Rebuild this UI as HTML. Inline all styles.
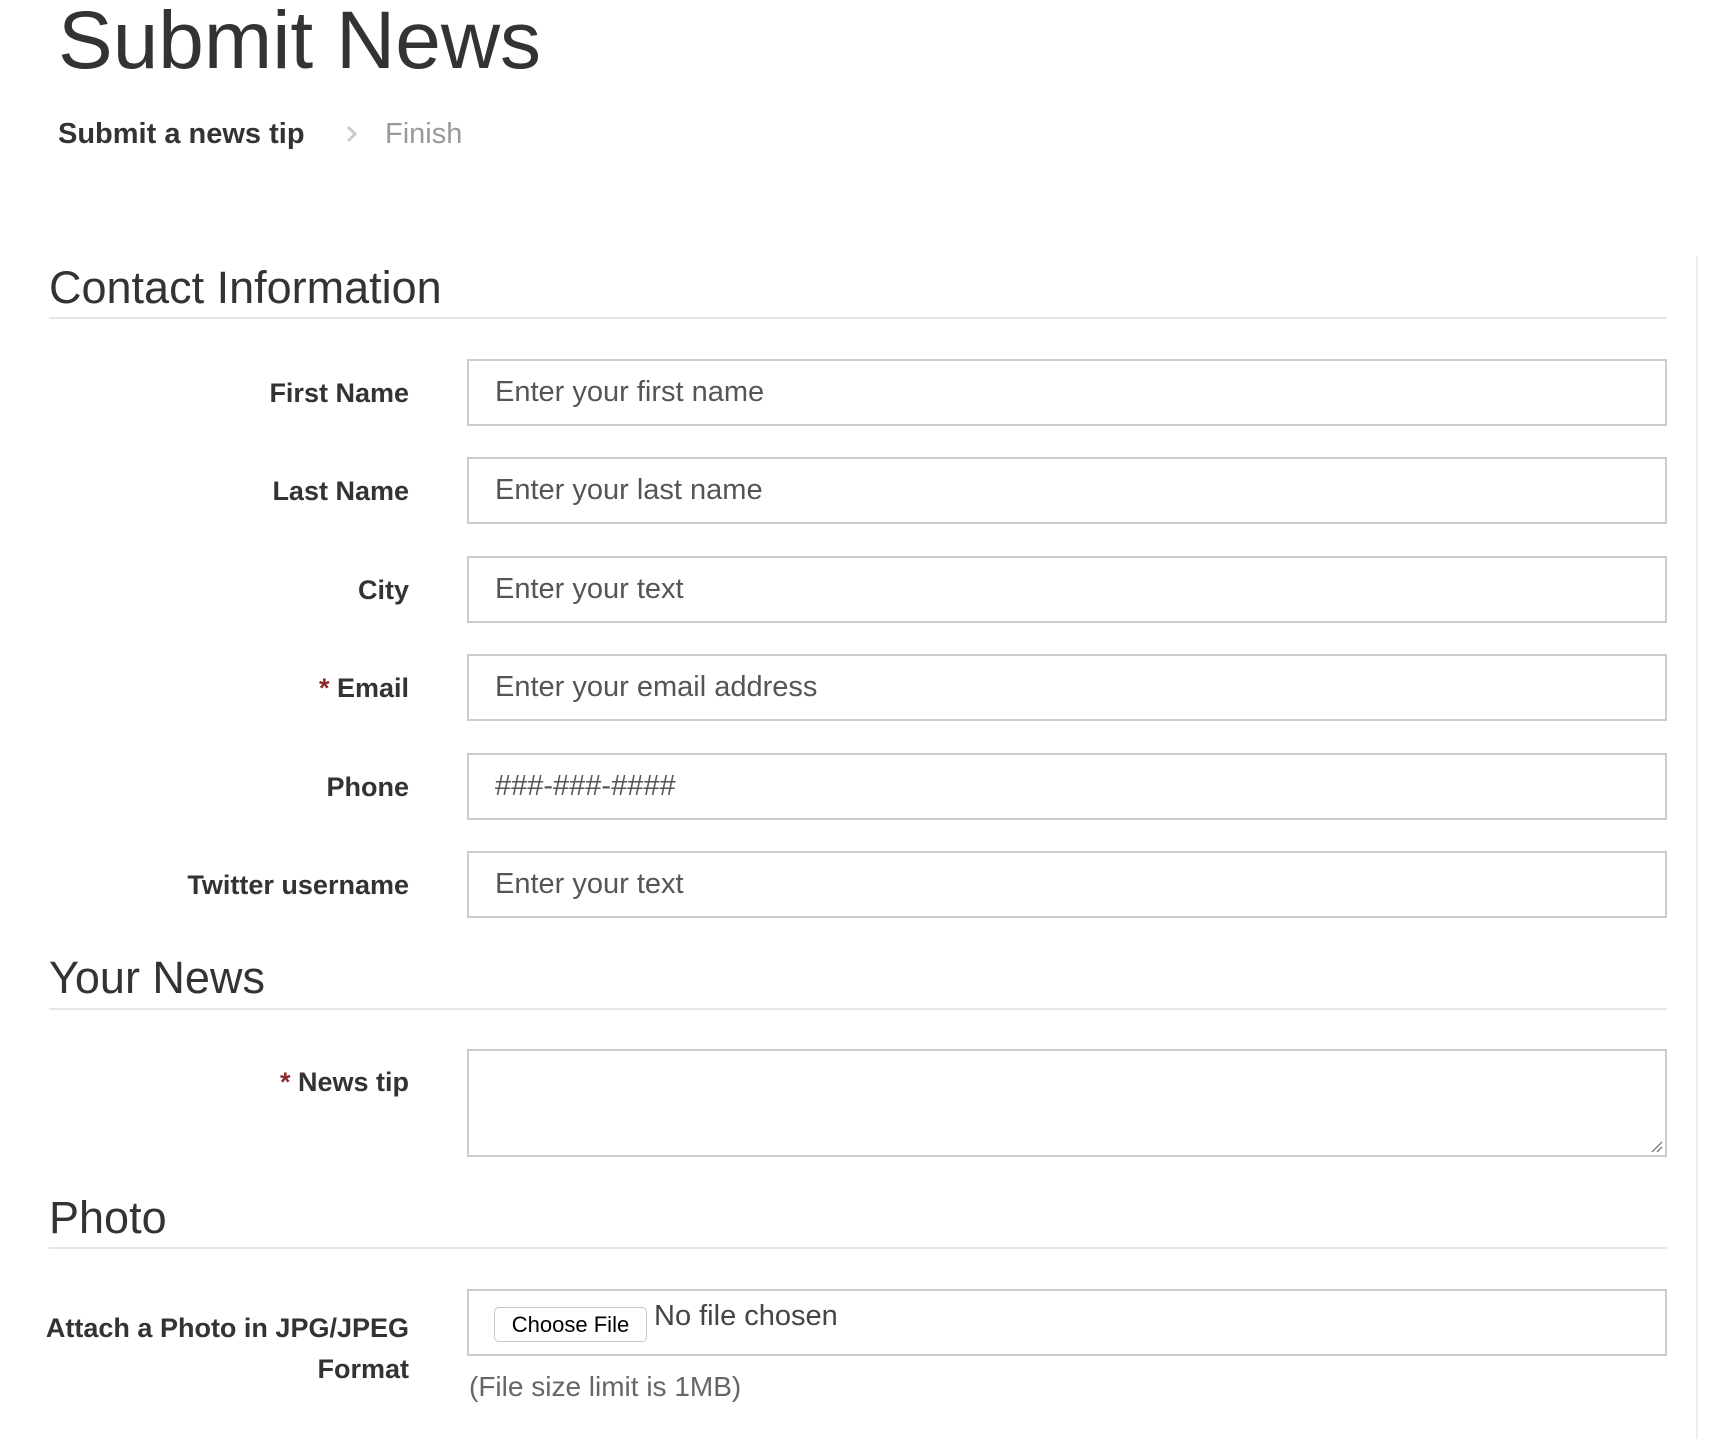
<!DOCTYPE html>
<html><head><meta charset="utf-8"><style>
body{margin:0;width:1710px;height:1439px;background:#fff;font-family:"Liberation Sans",Arial,sans-serif;color:#333;position:relative;overflow:hidden}
.a{position:absolute;white-space:nowrap}
.h2{font-size:45px;left:49px;line-height:1}
.rule{position:absolute;left:49px;width:1618px;height:2px;background:#e6e6e6}
.in{position:absolute;left:467px;width:1196px;height:63px;border:2px solid #ccc;background:#fff;box-sizing:content-box}
.ph{position:absolute;left:26px;top:0;line-height:63px;font-size:29px;color:#555}
.lb{position:absolute;right:1301px;font-size:27px;font-weight:bold;line-height:1;text-align:right}
.st{color:#8b2a2a}
</style></head><body>
<div class="a" style="left:58px;top:-4px;font-size:82px;line-height:1.1">Submit News</div>
<div class="a" style="left:58px;top:119px;font-size:29px;font-weight:bold;line-height:1.1">Submit a news tip</div>
<svg class="a" style="left:345px;top:124px" width="14" height="20" viewBox="0 0 14 20"><path d="M3 3l7 7-7 7" fill="none" stroke="#ccc" stroke-width="3"/></svg>
<div class="a" style="left:385px;top:119px;font-size:29px;color:#999;line-height:1.1">Finish</div>
<div style="position:absolute;left:1696px;top:256px;width:2px;height:1183px;background:#eee"></div>

<div class="a h2" style="top:265px">Contact Information</div>
<div class="rule" style="top:317px"></div>

<div class="lb" style="top:380px">First Name</div>
<div class="in" style="top:359px"><span class="ph">Enter your first name</span></div>
<div class="lb" style="top:478px">Last Name</div>
<div class="in" style="top:457px"><span class="ph">Enter your last name</span></div>
<div class="lb" style="top:577px">City</div>
<div class="in" style="top:556px"><span class="ph">Enter your text</span></div>
<div class="lb" style="top:675px"><span class="st">*</span> Email</div>
<div class="in" style="top:654px"><span class="ph">Enter your email address</span></div>
<div class="lb" style="top:774px">Phone</div>
<div class="in" style="top:753px"><span class="ph">###-###-####</span></div>
<div class="lb" style="top:872px">Twitter username</div>
<div class="in" style="top:851px"><span class="ph">Enter your text</span></div>

<div class="a h2" style="top:955px">Your News</div>
<div class="rule" style="top:1008px"></div>
<div class="lb" style="top:1069px"><span class="st">*</span> News tip</div>
<div class="in" style="top:1049px;height:104px"><svg style="position:absolute;right:2px;bottom:2px" width="14" height="14"><path d="M13 3L3 13M13 8L8 13" stroke="#777" stroke-width="1.3"/></svg></div>

<div class="a h2" style="top:1195px">Photo</div>
<div class="rule" style="top:1247px"></div>
<div class="lb" style="top:1308px;line-height:41px">Attach a Photo in JPG/JPEG<br>Format</div>
<div class="in" style="top:1289px">
<div style="position:absolute;left:25px;top:16px;width:151px;height:33px;border:1px solid #c8c8c8;border-radius:5px;background:#fff;font-size:22px;line-height:33px;text-align:center;color:#000">Choose File</div>
<span class="ph" style="left:185px;top:-6px;color:#444">No file chosen</span>
</div>
<div class="a" style="left:469px;top:1371px;font-size:28px;color:#666">(File size limit is 1MB)</div>
</body></html>
